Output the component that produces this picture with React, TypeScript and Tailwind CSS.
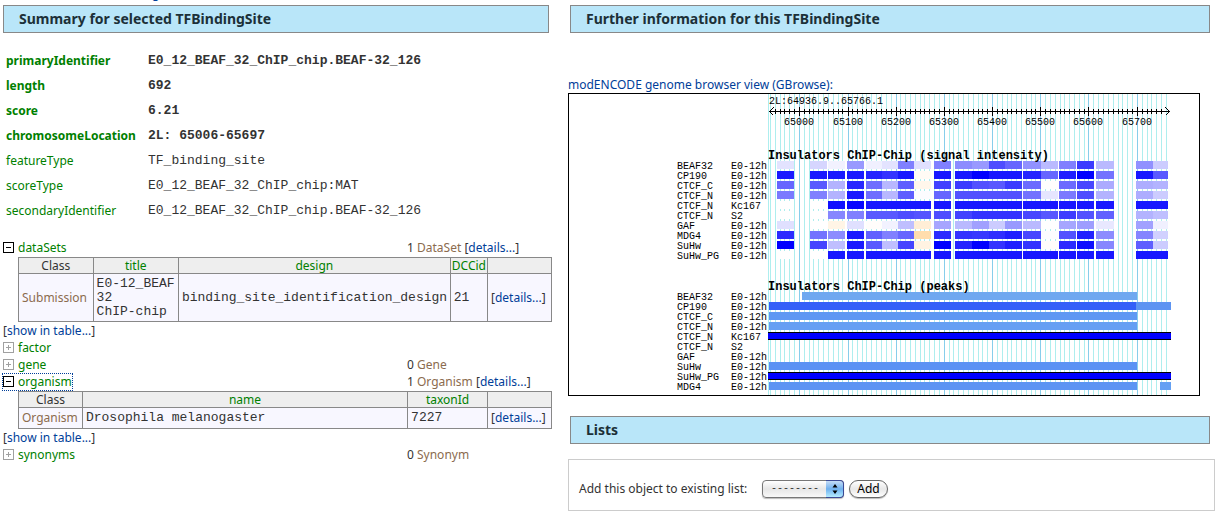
import type { ReactNode } from "react";

const sans = "font-['Noto_Sans','Open_Sans',sans-serif]";
const mono = "font-['Liberation_Mono',monospace] text-[13px]";

const attributes = [
  { name: "primaryIdentifier", value: "E0_12_BEAF_32_ChIP_chip.BEAF-32_126", bold: true },
  { name: "length", value: "692", bold: true },
  { name: "score", value: "6.21", bold: true },
  { name: "chromosomeLocation", value: "2L: 65006-65697", bold: true },
  { name: "featureType", value: "TF_binding_site", bold: false },
  { name: "scoreType", value: "E0_12_BEAF_32_ChIP_chip:MAT", bold: false },
  { name: "secondaryIdentifier", value: "E0_12_BEAF_32_ChIP_chip.BEAF-32_126", bold: false },
];

function SectionTitle({ children }: { children: ReactNode }) {
  return (
    <h2 className="flex h-7 items-center border border-[#888] bg-[#b9e6f9] px-[15px] text-[14px] font-bold text-[#1c3038]">
      {children}
    </h2>
  );
}

function Toggle({ open }: { open: boolean }) {
  return (
    <svg width="11" height="11" viewBox="0 0 11 11" shapeRendering="crispEdges" className="shrink-0" aria-hidden="true">
      <rect x="0.5" y="0.5" width="10" height="10" fill="#fff" stroke={open ? "#000" : "#a0a0a0"} />
      <path d="M3 5.5H8" stroke={open ? "#000" : "#a0a0a0"} />
      {!open && <path d="M5.5 3V8" stroke="#a0a0a0" />}
    </svg>
  );
}

function Details() {
  return (
    <span className="whitespace-nowrap">
      [<a href="#details" className="text-[#003e99]">details...</a>]
    </span>
  );
}

function ShowInTable() {
  return (
    <div className="h-[17px] leading-[17px]">
      [<a href="#table" className="text-[#003e99]">show in table...</a>]
    </div>
  );
}

function CollectionRow(props: { name: string; open?: boolean; focused?: boolean; count?: number; type?: string; details?: boolean }) {
  return (
    <div className="grid h-[17px] grid-cols-[404fr_145fr] items-center leading-[17px]">
      <div>
        <button
          type="button"
          className={
            props.focused
              ? "flex h-4 items-center gap-1 text-[#008000] outline-1 outline-dotted outline-[#003e99]"
              : "flex h-4 items-center gap-1 text-[#008000]"
          }
        >
          <Toggle open={!!props.open} />
          {props.name}
        </button>
      </div>
      {props.type && (
        <div className="whitespace-nowrap">
          {props.count} <span className="text-[#8b6b4e]">{props.type}</span> {props.details && <Details />}
        </div>
      )}
    </div>
  );
}

const th = "h-4 border border-[#888] bg-[#eee] p-0 text-center font-normal leading-[14px]";
const td = "border border-[#888] bg-[#f8f7ff] px-[3px] leading-[14px]";

const MAJORS = [799, 848, 896, 944, 992, 1040, 1088, 1137];
const MINORS = Array.from({ length: 83 }, (_, i) => Math.floor(770.4 + i * 4.829)).filter(
  (x) => !MAJORS.some((m) => Math.abs(m - x) < 2),
);

const COLUMNS: [number, number][] = [
  [777, 794], [810, 827], [828, 845], [847, 864], [866, 882], [882, 898], [898, 914], [914, 931],
  [934, 951], [955, 972], [972, 989], [989, 1005], [1005, 1022], [1023, 1041], [1041, 1058],
  [1059, 1076], [1077, 1094], [1096, 1114], [1136, 1153], [1153, 1168],
];

const SIGNAL: { name: string; stage: string; v: number[] }[] = [
  { name: "BEAF32", stage: "E0-12h", v: [11, 16, 5, 40, 6, 11, 50, 12, 50, 45, 40, 70, 60, 43, 27, 50, 77, 27, 43, 20] },
  { name: "CP190", stage: "E0-12h", v: [90, 90, 90, 90, 86, 80, 91, -5, 91, 91, 100, 91, 91, 86, 60, 88, 100, 55, 91, 65] },
  { name: "CTCF_C", stage: "E0-12h", v: [60, 65, 30, 85, 57, 28, 63, -10, 74, 77, 68, 65, 77, 58, -1, 58, 72, 33, 32, 30] },
  { name: "CTCF_N", stage: "E0-12h", v: [52, 50, 30, 90, 57, 28, 63, 1, 60, 68, 68, 68, 68, 55, 10, 52, 70, 30, 32, 20] },
  { name: "CTCF_N", stage: "Kc167", v: [0, 0, 94, 98, 91, 91, 91, 91, 91, 91, 91, 91, 91, 91, 91, 91, 91, 91, 91, 91] },
  { name: "CTCF_N", stage: "S2", v: [0, 0, 47, 50, 65, 65, 70, 67, 70, 74, 80, 80, 80, 72, 66, 76, 68, 62, 30, 25] },
  { name: "GAF", stage: "E0-12h", v: [12, 0, -12, 12, -2, 5, 25, -20, 35, 27, 37, 20, 40, 27, 0, 35, 38, 9, 37, 6] },
  { name: "MDG4", stage: "E0-12h", v: [83, 55, 45, 90, 62, 50, 60, -40, 83, 80, 78, 82, 88, 72, 1, 68, 87, 45, 48, 18] },
  { name: "SuHw", stage: "E0-12h", v: [100, 73, 25, 90, 65, 25, 73, -14, 100, 86, 100, 80, 88, 80, -2, 83, 95, 47, 63, 20] },
  { name: "SuHw_PG", stage: "E0-12h", v: [0, 0, 91, 91, 91, 91, 91, 91, 91, 91, 91, 91, 91, 91, 91, 91, 91, 91, 91, 91] },
];

const PEAKS: { name: string; stage: string; bars: [number, number, string][]; outlined?: boolean }[] = [
  { name: "BEAF32", stage: "E0-12h", bars: [[802, 1137, "#6fa8f0"]] },
  { name: "CP190", stage: "E0-12h", bars: [[769, 1136, "#3460f8"], [1136, 1171, "#5c94f2"]] },
  { name: "CTCF_C", stage: "E0-12h", bars: [[769, 1137, "#5f98f3"]] },
  { name: "CTCF_N", stage: "E0-12h", bars: [[769, 1137, "#669ff3"]] },
  { name: "CTCF_N", stage: "Kc167", bars: [[768, 1171, "#0000ff"]], outlined: true },
  { name: "CTCF_N", stage: "S2", bars: [] },
  { name: "GAF", stage: "E0-12h", bars: [] },
  { name: "SuHw", stage: "E0-12h", bars: [[769, 1137, "#5b92f4"]] },
  { name: "SuHw_PG", stage: "E0-12h", bars: [[768, 1171, "#0000ff"]], outlined: true },
  { name: "MDG4", stage: "E0-12h", bars: [[769, 1137, "#5c94f3"], [1160, 1171, "#64a0f3"]] },
];

// Positive values shade from white to blue, negative ones from white to orange.
function shade(v: number) {
  const t = Math.abs(v) / 100;
  if (v < 0) return `rgb(255,${Math.round(255 - 85 * t)},${Math.round(255 - 205 * t)})`;
  const c = Math.round(255 * (1 - t));
  return `rgb(${c},${c},255)`;
}

function GenomeBrowser() {
  return (
    <svg
      viewBox="568 93 632 303"
      className="block w-full max-w-[632px] font-['Liberation_Mono',monospace] text-[10px]"
      shapeRendering="crispEdges"
      role="img"
      aria-label="Genome browser"
    >
      <rect x="568.5" y="93.5" width="631" height="302" fill="#fff" stroke="#000" />
      {[768, ...MINORS].map((x) => (
        <rect key={x} x={x} y="94" width="1" height="301" fill="#aeeeee" />
      ))}
      {MAJORS.map((x) => (
        <rect key={x} x={x} y="94" width="1" height="301" fill="#87ceeb" />
      ))}
      <text x="769" y="104">2L:64936.9..65766.1</text>
      <path d="M769 111.5H1170M773.5 107.5l-4 4 4 4M1165.5 107.5l4 4-4 4" fill="none" stroke="#000" />
      {MINORS.filter((x) => x > 771 && x < 1166).map((x) => (
        <rect key={x} x={x} y="109" width="1" height="5" />
      ))}
      {MAJORS.map((x, i) => (
        <g key={x}>
          <rect x={x} y="107" width="1" height="9" />
          <text x={x} y="125" textAnchor="middle">{65000 + i * 100}</text>
        </g>
      ))}
      {SIGNAL.map((row, r) => (
        <g key={r}>
          <text x="677" y={169 + r * 10}>{row.name}</text>
          <text x="731" y={169 + r * 10}>{row.stage}</text>
          {row.v.map((v, c) => (
            <rect key={c} x={COLUMNS[c][0]} y={161 + r * 10} width={COLUMNS[c][1] - COLUMNS[c][0]} height="8" fill={shade(v)} />
          ))}
        </g>
      ))}
      <text x="768" y="159" className="text-[12px] font-bold">Insulators ChIP-Chip (signal intensity)</text>
      {PEAKS.map((row, r) => (
        <g key={r}>
          <text x="677" y={300 + r * 10}>{row.name}</text>
          <text x="731" y={300 + r * 10}>{row.stage}</text>
          {row.bars.map(([a, b, fill]) => (
            <g key={a}>
              <rect x={a} y={292 + r * 10} width={b - a} height="8" fill={row.outlined ? "#000" : fill} />
              {row.outlined && <rect x={a} y={293 + r * 10} width={b - a} height="6" fill={fill} />}
            </g>
          ))}
        </g>
      ))}
      <text x="768" y="290" className="text-[12px] font-bold">Insulators ChIP-Chip (peaks)</text>
    </svg>
  );
}

export default function App() {
  return (
    <div className={`${sans} bg-white text-[12px] leading-4 text-[#333]`}>
      <div className="flex h-[5px] items-end overflow-hidden pb-[3px] pl-[152px]">
        <a href="#top" className="text-[#003e99]">g</a>
      </div>
      <div className="grid grid-cols-[552fr_663fr]">
        <section className="min-w-0 pl-[3px]">
          <div className="mr-[3px]">
            <SectionTitle>Summary for selected TFBindingSite</SectionTitle>
          </div>
          <table className="mt-[15px] ml-[3px] border-collapse">
            <tbody>
              {attributes.map((a) => (
                <tr key={a.name} className={a.bold ? "h-[25px] font-bold" : "h-[25px]"}>
                  <th scope="row" className={a.bold ? "w-[142px] p-0 text-left font-bold text-[#008000]" : "w-[142px] p-0 text-left font-normal text-[#008000]"}>
                    {a.name}
                  </th>
                  <td className={`${mono} p-0`}>{a.value}</td>
                </tr>
              ))}
            </tbody>
          </table>

          <div className="mt-4">
            <CollectionRow name="dataSets" open count={1} type="DataSet" details />
            <div className="mt-px ml-[15px]">
              <table className="w-full table-fixed border-collapse">
                <colgroup>
                  <col className="w-[14%]" />
                  <col className="w-[16%]" />
                  <col className="w-[51%]" />
                  <col className="w-[7%]" />
                  <col className="w-[12%]" />
                </colgroup>
                <thead>
                  <tr>
                    <th className={th}>Class</th>
                    <th className={`${th} text-[#008000]`}>title</th>
                    <th className={`${th} text-[#008000]`}>design</th>
                    <th className={`${th} text-[#008000]`}>DCCid</th>
                    <th className={th}></th>
                  </tr>
                </thead>
                <tbody>
                  <tr className="h-12">
                    <td className={`${td} text-[#8b6b4e]`}>Submission</td>
                    <td className={`${td} ${mono}`}>
                      E0-12_BEAF 32 <span className="whitespace-nowrap">ChIP-chip</span>
                    </td>
                    <td className={`${td} ${mono}`}>binding_site_identification_design</td>
                    <td className={`${td} ${mono}`}>21</td>
                    <td className={td}><Details /></td>
                  </tr>
                </tbody>
              </table>
            </div>
            <ShowInTable />
            <CollectionRow name="factor" />
            <CollectionRow name="gene" count={0} type="Gene" />
            <CollectionRow name="organism" open focused count={1} type="Organism" details />
            <div className="mt-px ml-[15px]">
              <table className="w-full table-fixed border-collapse">
                <colgroup>
                  <col className="w-[12%]" />
                  <col className="w-[61%]" />
                  <col className="w-[15%]" />
                  <col className="w-[12%]" />
                </colgroup>
                <thead>
                  <tr>
                    <th className={th}>Class</th>
                    <th className={`${th} text-[#008000]`}>name</th>
                    <th className={`${th} text-[#008000]`}>taxonId</th>
                    <th className={th}></th>
                  </tr>
                </thead>
                <tbody>
                  <tr className="h-[21px]">
                    <td className={`${td} text-[#8b6b4e]`}>Organism</td>
                    <td className={`${td} ${mono}`}>Drosophila melanogaster</td>
                    <td className={`${td} ${mono}`}>7227</td>
                    <td className={td}><Details /></td>
                  </tr>
                </tbody>
              </table>
            </div>
            <ShowInTable />
            <CollectionRow name="synonyms" count={0} type="Synonym" />
          </div>
        </section>

        <section className="min-w-0 pl-4">
          <div className="mr-[5px] ml-[2px]">
            <SectionTitle>Further information for this TFBindingSite</SectionTitle>
          </div>
          <a href="#gbrowse" className="mt-11 block text-[#003e99]">
            modENCODE genome browser view (GBrowse):
          </a>
          <GenomeBrowser />
          <div className="mt-5 mr-[5px] ml-[2px]">
            <SectionTitle>Lists</SectionTitle>
          </div>
          <form className="mt-[15px] flex h-[52px] items-center border border-[#ccc] pt-2 pl-[10px]">
            <label htmlFor="list" className="min-w-[179px]">Add this object to existing list:</label>
            <span className="relative ml-1 inline-flex">
              <select
                id="list"
                className="h-[18px] w-[82px] appearance-none rounded-[4px] border border-[#777] bg-linear-to-b from-white via-[#e6e6e6] to-[#f8f8f8] pl-2 font-['Liberation_Mono',monospace] text-[10px] leading-4 text-[#333] shadow-[0_1px_1px_#bbb]"
              >
                <option>--------</option>
              </select>
              <span className="pointer-events-none absolute inset-y-0 right-0 flex w-[18px] items-center justify-center rounded-r-[4px] border border-l-0 border-[#3c4a94] bg-linear-to-b from-[#c4dcf6] via-[#6fb0ee] to-[#b4ecff]">
                <svg width="6" height="10" viewBox="0 0 6 10" aria-hidden="true">
                  <path d="M3 0L5.5 3.5H0.5ZM3 10L5.5 6.5H0.5Z" fill="#000" />
                </svg>
              </span>
            </span>
            <button
              type="button"
              className="ml-[5px] h-[18px] w-[39px] rounded-full border border-[#666] bg-linear-to-b from-white via-[#e8e8e8] to-white text-[12px] leading-4 text-black shadow-[0_1px_1px_#bbb]"
            >
              Add
            </button>
          </form>
        </section>
      </div>
    </div>
  );
}
